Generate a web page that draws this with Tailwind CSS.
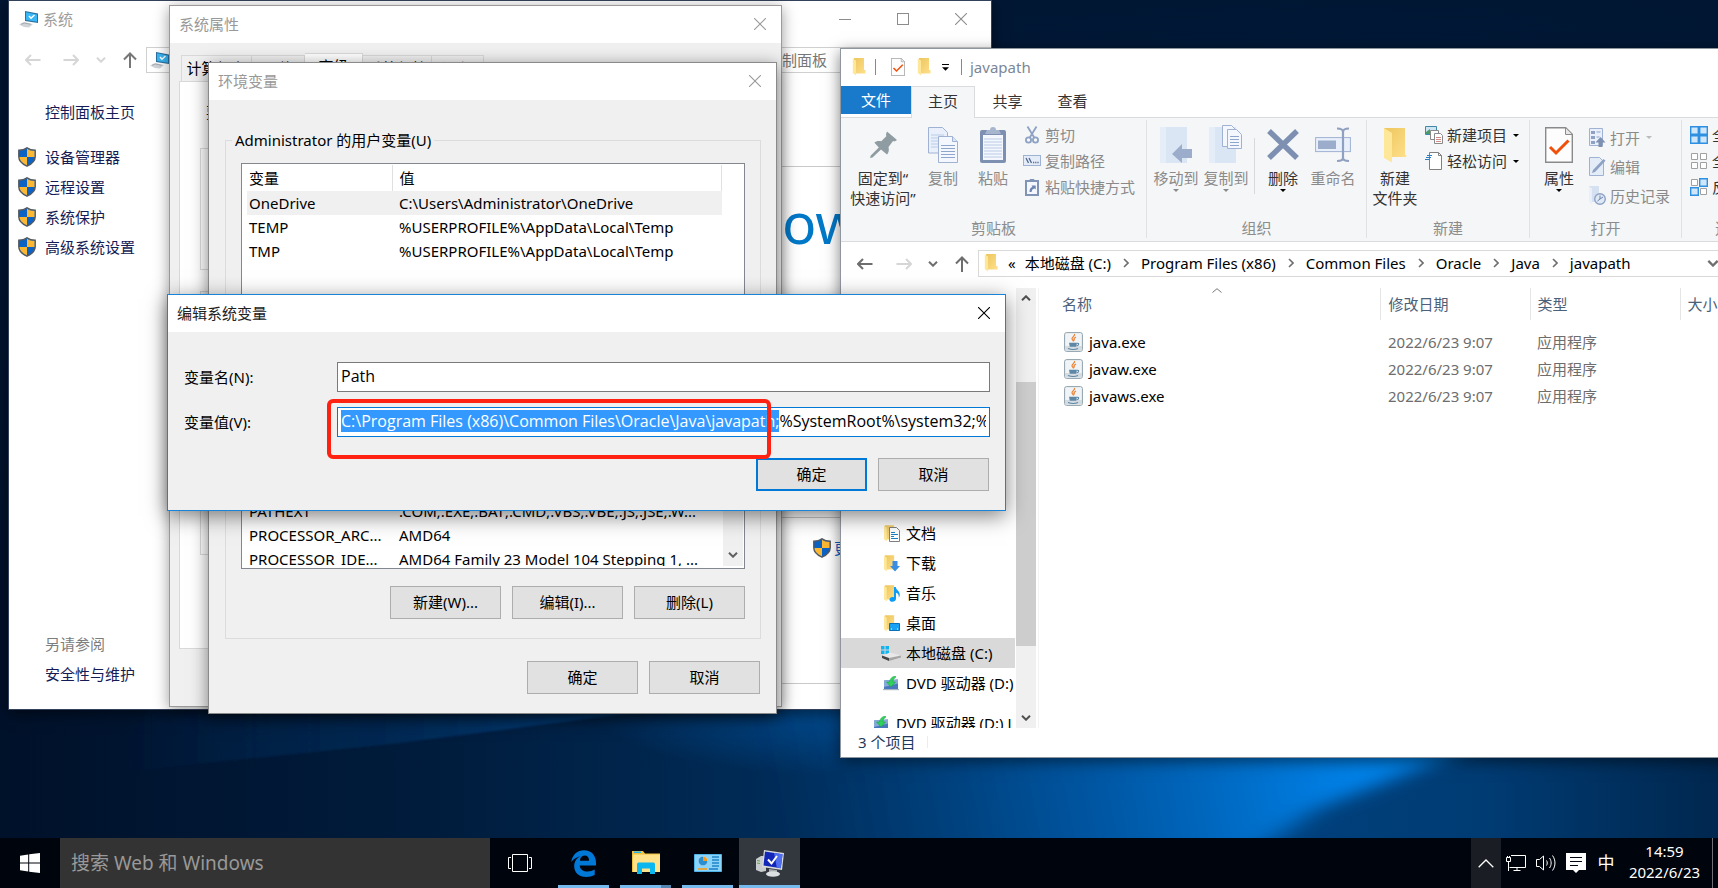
<!DOCTYPE html>
<html lang="zh-CN">
<head>
<meta charset="utf-8">
<title>编辑系统变量</title>
<script src="https://cdn.jsdelivr.net/npm/@tailwindcss/browser@4"></script>
</head>
<body class="h-screen overflow-hidden bg-[#001a38] font-['Noto_Sans','Noto_Sans_CJK_SC',sans-serif] text-[15px] leading-5 text-black">

<svg class="absolute h-0 w-0" aria-hidden="true">
  <defs>
    <linearGradient id="gold" x1="0" x2="1" y1="0" y2="1"><stop offset="0" stop-color="#ecc55e"/><stop offset="1" stop-color="#ffe08a"/></linearGradient>
    <symbol id="shield" viewBox="0 0 18 20">
      <path d="M9 .8c2.400 1.800 5 2.500 8.200 2.500v6.500c0 4.200-3.400 7.300-8.200 9.400C4.200 17.100.8 14 .8 9.800V3.300C4 3.300 6.600 2.600 9 .8z" fill="#0c63c4" stroke="#55595e" stroke-width="1.400"/>
      <path d="M9 1.700c2.200 1.500 4.600 2.200 7.500 2.300V10H9zM9 10v8.300C4.800 16.400 1.700 13.700 1.500 10z" fill="#fdb833"/>
    </symbol>
    <symbol id="pc" viewBox="0 0 20 17">
      <path d="M6 0l13 2.500v9.500L6 10z" fill="#2b6f9e"/><path d="M7 1.300l11 2.100v7.400L7 9z" fill="#38b6f5"/>
      <path d="M10 5l2 2.200L15.500 4" stroke="#fff" stroke-width="1.500" fill="none"/>
      <path d="M0 13.500L5 11l9 2-4 3.500-5-.5z" fill="#cfd3d8"/><path d="M2 13.300l3.500-1.300 6 1.300" stroke="#9aa0a6" stroke-width=".8" fill="none"/>
    </symbol>
    <symbol id="folder" viewBox="0 0 14 18">
      <path d="M2 0h10v12h1.500v3.500H2z" fill="url(#gold)"/><path d="M.8.600L4 2.500v15L.8 15z" fill="#ffe79a"/>
    </symbol>
    <symbol id="bigfolder" viewBox="0 0 28 36">
      <path d="M3 1h21v26.500l2 1.500-2 1H3z" fill="url(#gold)"/><path d="M3 1l8 5v29.500L3 31z" fill="#ffe79a"/>
    </symbol>
    <symbol id="close" viewBox="0 0 12 12"><path d="M0 0l12 12M12 0L0 12" stroke="currentColor" stroke-width="1.100" fill="none"/></symbol>
    <symbol id="arrow" viewBox="0 0 16 12"><path d="M15.500 6H1M6 1L1 6l5 5" stroke="currentColor" stroke-width="2" fill="none"/></symbol>
    <symbol id="up" viewBox="0 0 14 16"><path d="M7 16V1.500M1 7.500l6-6 6 6" stroke="currentColor" stroke-width="2" fill="none"/></symbol>
    <symbol id="chev" viewBox="0 0 10 6"><path d="M1 .7l4 4 4-4" stroke="currentColor" stroke-width="2" fill="none"/></symbol>
    <symbol id="sep" viewBox="0 0 6 10"><path d="M1 1l4 4-4 4" stroke="currentColor" stroke-width="1.600" fill="none"/></symbol>
    <symbol id="drop" viewBox="0 0 6 3"><path d="M0 0h6L3 3z" fill="currentColor"/></symbol>
    <symbol id="doccheck" viewBox="0 0 28 36">
      <path d="M.7.700h20l6.600 6.600v28H.7z" fill="#fdfdfd" stroke="#8a8a8a" stroke-width="1.400"/><path d="M20.500 1v6.500H27" fill="#e8e8e8" stroke="#8a8a8a"/>
      <path d="M5 20l6 6L23.500 13.500" stroke="#f0500a" stroke-width="3" fill="none"/>
    </symbol>
    <symbol id="java" viewBox="0 0 19 20">
      <rect x=".6" y=".6" width="17.800" height="18.800" rx="2" fill="#f1f4f6" stroke="#8fa0ad"/><path d="M1 14h17v4.500H1z" fill="#d3dbe1"/>
      <path d="M10.500 2c1 2-3 3-2.500 5 .2 1 1.500 1.200 1.500 2.500M12 5c-2 1-2.500 2-1.500 3.500" stroke="#ec7d2b" stroke-width="1.200" fill="none"/>
      <path d="M5 10.700h8l-.8 4H5.800z" fill="#5d87a5"/><path d="M13 11.200c2.500-.2 2 2.300-.5 2.500M4 16.600c3 1 7.500 1 10 0" stroke="#5d87a5" stroke-width="1.100" fill="none"/>
    </symbol>
    <symbol id="dvd" viewBox="0 0 16 15">
      <path d="M1 4.500l14-1v9.500H1z" fill="#4a78bd"/><path d="M1 4.500l14-1v4L1 11z" fill="#86a9d8"/><path d="M0 13h16v1.200H0z" fill="#a9b4c2"/>
      <path d="M12.500 0C9 .5 7 2.500 6.500 6H3.500L8 11l4.500-5H9.800c.2-2 .9-3.500 2.700-4.500z" fill="#2fd05c" stroke="#13a03c" stroke-width=".5"/>
    </symbol>
  </defs>
</svg>

<main class="relative h-full overflow-hidden">
  <!-- wallpaper -->
  <svg class="absolute inset-0 h-full w-full" viewBox="0 0 1718 888" preserveAspectRatio="none" aria-hidden="true">
    <defs>
      <linearGradient id="base" x1="0" x2="1"><stop offset="0" stop-color="#00112a"/><stop offset=".25" stop-color="#001c3c"/><stop offset=".5" stop-color="#002f5e"/><stop offset=".75" stop-color="#00407c"/><stop offset=".86" stop-color="#003c74"/><stop offset="1" stop-color="#00274f"/></linearGradient>
      <linearGradient id="topDark" x1="0" x2="0" y1="0" y2="1"><stop offset="0" stop-color="#001632" stop-opacity=".97"/><stop offset=".3" stop-color="#001632" stop-opacity=".8"/><stop offset=".7" stop-color="#001632" stop-opacity="0"/></linearGradient>
      <linearGradient id="beam" gradientUnits="userSpaceOnUse" x1="780" y1="838" x2="1370" y2="720"><stop offset="0" stop-color="#004a8c" stop-opacity="0"/><stop offset=".45" stop-color="#0060b4" stop-opacity=".6"/><stop offset=".9" stop-color="#007ce0"/><stop offset="1" stop-color="#0084ec"/></linearGradient>
      <linearGradient id="ray" gradientUnits="userSpaceOnUse" x1="120" y1="0" x2="640" y2="0"><stop offset="0" stop-color="#003c78" stop-opacity="0"/><stop offset=".5" stop-color="#003468" stop-opacity=".5"/><stop offset="1" stop-color="#004a90" stop-opacity=".8"/></linearGradient>
      <radialGradient id="haze"><stop offset="0" stop-color="#00529c" stop-opacity=".8"/><stop offset="1" stop-color="#00529c" stop-opacity="0"/></radialGradient>
      <filter id="soft" x="-10%" y="-30%" width="120%" height="160%"><feGaussianBlur stdDeviation="16 7"/></filter>
      <filter id="edge" x="-5%" y="-20%" width="110%" height="140%"><feGaussianBlur stdDeviation="1"/></filter>
    </defs>
    <rect width="1718" height="888" fill="url(#base)"/>
    <rect width="1718" height="888" fill="url(#topDark)"/>
    <path d="M100 774L400 743 640 712V640H200z" fill="url(#ray)" filter="url(#edge)"/>
    <ellipse cx="830" cy="705" rx="240" ry="70" fill="url(#haze)"/>
    <path d="M760 690H1550L1465 750 1315 810 1230 870H700z" fill="url(#beam)" filter="url(#soft)"/>
  </svg>

  <!-- 系统 -->
  <section class="absolute left-[8px] top-0 flex h-[710px] w-[984px] flex-col border border-[#33415a] bg-white shadow-[0_4px_14px_rgba(0,0,0,0.5)]">
    <header class="flex h-9 items-center pl-[10px] pr-6 text-[#9d9d9d]">
      <svg class="h-[17px] w-5"><use href="#pc"/></svg>
      <h2 class="ml-1">系统</h2>
      <div class="ml-auto flex items-center gap-[46px] text-[#8c8c8c]">
        <button aria-label="最小化" class="h-px w-3 bg-[#8c8c8c]"></button>
        <button aria-label="最大化" class="h-3 w-3 border border-[#8c8c8c]"></button>
        <button aria-label="关闭" class="h-3 w-3"><svg class="h-3 w-3"><use href="#close"/></svg></button>
      </div>
    </header>
    <div class="mt-[10px] flex h-[26px] items-center pl-4 text-[#d6d6d6]">
      <button aria-label="后退"><svg class="h-3 w-4"><use href="#arrow"/></svg></button>
      <button aria-label="前进" class="ml-[22px]"><svg class="h-3 w-4 rotate-180"><use href="#arrow"/></svg></button>
      <button aria-label="最近" class="ml-[17px]"><svg class="h-[6px] w-[10px]"><use href="#chev"/></svg></button>
      <button aria-label="向上" class="ml-[17px] text-[#777]"><svg class="h-4 w-[14px]"><use href="#up"/></svg></button>
      <div class="ml-[9px] flex h-[26px] flex-1 items-center border border-[#d0d0d0] pl-[3px] text-[#777]">
        <svg class="h-[17px] w-5"><use href="#pc"/></svg>
        <span class="ml-[612px]">制面板</span>
      </div>
    </div>
    <div class="flex flex-1">
      <nav class="flex w-[160px] flex-col pb-[25px] pl-[9px] pt-[29px] text-[#151c55]">
        <a href="#" class="ml-[27px] leading-5">控制面板主页</a>
        <ul class="mt-5">
          <li class="flex h-[30px] items-center gap-[9px]"><svg class="h-5 w-[18px]"><use href="#shield"/></svg><a href="#">设备管理器</a></li>
          <li class="flex h-[30px] items-center gap-[9px]"><svg class="h-5 w-[18px]"><use href="#shield"/></svg><a href="#">远程设置</a></li>
          <li class="flex h-[30px] items-center gap-[9px]"><svg class="h-5 w-[18px]"><use href="#shield"/></svg><a href="#">系统保护</a></li>
          <li class="flex h-[30px] items-center gap-[9px]"><svg class="h-5 w-[18px]"><use href="#shield"/></svg><a href="#">高级系统设置</a></li>
        </ul>
        <p class="ml-[27px] mt-auto text-[#7d7d7d]">另请参阅</p>
        <a href="#" class="ml-[27px] mt-[10px]">安全性与维护</a>
      </nav>
      <div class="flex flex-1 flex-col pl-[613px] pt-[93px]">
        <div class="h-[352px] border-y border-[#c9c9c9] pt-[19px]">
          <p class="text-[57px] leading-[72px] text-[#0078c8]">ow</p>
        </div>
        <div class="flex h-[166px] items-start gap-[3px] border-b border-[#c9c9c9] pl-[31px] pt-5 text-[#0a5dc2]">
          <svg class="h-5 w-[18px]"><use href="#shield"/></svg><a href="#">更改设置</a>
        </div>
      </div>
    </div>
  </section>

  <!-- 系统属性 -->
  <section class="absolute left-[169px] top-[5px] flex h-[702px] w-[613px] flex-col border border-[#9a9a9a] bg-[#f0f0f0] shadow-[0_3px_14px_rgba(0,0,0,0.4)]">
    <header class="flex h-[37px] items-center justify-between bg-white pb-[2px] pl-[9px] pr-[15px] text-[#999]">
      <h2>系统属性</h2>
      <button aria-label="关闭"><svg class="h-3 w-3"><use href="#close"/></svg></button>
    </header>
    <div class="mx-[9px] mt-[10px] flex items-end pl-[2px]" role="tablist">
      <button role="tab" class="h-[26px] w-[71px] border border-b-0 border-[#d9d9d9] pb-[2px]">计算机名</button>
      <button role="tab" class="h-[26px] w-[53px] border border-b-0 border-l-0 border-[#d9d9d9] pb-[2px]">硬件</button>
      <button role="tab" class="h-7 w-[58px] border border-b-0 border-l-0 border-[#d9d9d9] bg-white pb-1">高级</button>
      <button role="tab" class="h-[26px] w-[69px] border border-b-0 border-l-0 border-[#d9d9d9] pb-[2px]">系统保护</button>
      <button role="tab" class="h-[26px] w-[52px] border border-b-0 border-l-0 border-[#d9d9d9] pb-[2px]">远程</button>
    </div>
    <div class="mx-[9px] mb-[57px] flex flex-1 flex-col border border-[#d9d9d9] bg-white px-5 pt-5">
      <p class="ml-[6px]">要进行大多数更改，你必须作为管理员登录。</p>
      <div class="mt-[26px] h-[122px] border border-[#dcdcdc]"></div>
      <div class="mt-[21px] h-[264px] border border-[#dcdcdc]"></div>
    </div>
  </section>

  <!-- 环境变量 -->
  <section class="absolute left-[208px] top-[62px] flex h-[652px] w-[569px] flex-col border border-[#8a8a8a] bg-[#f0f0f0] shadow-[0_4px_16px_rgba(0,0,0,0.5)]">
    <header class="flex h-[37px] shrink-0 items-center justify-between bg-white pb-[2px] pl-[9px] pr-[15px] text-[#999]">
      <h2>环境变量</h2>
      <button aria-label="关闭"><svg class="h-3 w-3"><use href="#close"/></svg></button>
    </header>
    <fieldset class="ml-4 mr-[15px] mt-[30px] h-[245px] border border-[#dcdcdc] px-[15px]">
      <legend class="-ml-[9px] px-[3px]">Administrator 的用户变量(U)</legend>
      <div class="mt-[13px] h-[180px] border border-[#828790] bg-white px-[5px] pt-px">
        <table class="w-[475px] table-fixed text-left">
          <thead><tr class="h-[26px]"><th class="w-[145px] border-r border-[#e0e0e0] pl-[2px] font-normal">变量</th><th class="border-r border-[#e0e0e0] pl-[7px] font-normal">值</th></tr></thead>
          <tbody>
            <tr class="h-6 bg-[#f0f0f0]"><td class="pl-[2px]">OneDrive</td><td class="pl-[7px]">C:\Users\Administrator\OneDrive</td></tr>
            <tr class="h-6"><td class="pl-[2px]">TEMP</td><td class="pl-[7px]">%USERPROFILE%\AppData\Local\Temp</td></tr>
            <tr class="h-6"><td class="pl-[2px]">TMP</td><td class="pl-[7px]">%USERPROFILE%\AppData\Local\Temp</td></tr>
          </tbody>
        </table>
      </div>
    </fieldset>
    <div class="ml-4 mr-[15px] mt-auto flex h-[242px] flex-col border border-[#dcdcdc] px-[15px]">
      <div class="mt-[20px] flex h-[151px] justify-between overflow-hidden border border-[#828790] bg-white pb-[2px] pl-[5px] pr-px">
        <div class="flex flex-1 flex-col overflow-hidden">
        <table class="mt-[80px] w-[470px] table-fixed text-left">
          <tbody>
            <tr class="h-6"><td class="w-[145px] pl-[2px]">PATHEXT</td><td class="whitespace-nowrap pl-[7px]">.COM;.EXE;.BAT;.CMD;.VBS;.VBE;.JS;.JSE;.W...</td></tr>
            <tr class="h-6"><td class="whitespace-nowrap pl-[2px]">PROCESSOR_ARC...</td><td class="pl-[7px]">AMD64</td></tr>
            <tr class="h-6"><td class="whitespace-nowrap pl-[2px]">PROCESSOR_IDE...</td><td class="whitespace-nowrap pl-[7px]">AMD64 Family 23 Model 104 Stepping 1, ...</td></tr>
          </tbody>
        </table>
        </div>
        <div class="flex w-5 items-end justify-center bg-[#f0f0f0] pb-2 text-[#606060]"><svg class="h-[6px] w-[10px]"><use href="#chev"/></svg></div>
      </div>
      <div class="mt-[17px] flex justify-end gap-[11px]">
        <button class="h-[33px] w-[111px] border border-[#adadad] bg-[#e1e1e1] pb-[2px]">新建(W)...</button>
        <button class="h-[33px] w-[111px] border border-[#adadad] bg-[#e1e1e1] pb-[2px]">编辑(I)...</button>
        <button class="h-[33px] w-[111px] border border-[#adadad] bg-[#e1e1e1] pb-[2px]">删除(L)</button>
      </div>
    </div>
    <div class="mb-[19px] mr-4 mt-[22px] flex justify-end gap-[11px]">
      <button class="h-[33px] w-[111px] border border-[#adadad] bg-[#e1e1e1] pb-[2px]">确定</button>
      <button class="h-[33px] w-[111px] border border-[#adadad] bg-[#e1e1e1] pb-[2px]">取消</button>
    </div>
  </section>

  <!-- 资源管理器: javapath -->
  <section class="absolute -right-[60px] left-[840px] top-[48px] flex h-[710px] flex-col overflow-hidden border border-[#8f969e] bg-white shadow-[0_4px_14px_rgba(0,0,0,0.5)]">
    <header class="flex h-[37px] shrink-0 items-center pb-px pl-[11px]">
      <svg class="h-[18px] w-[14px]"><use href="#folder"/></svg>
      <span class="ml-[9px] h-4 w-px bg-[#888]"></span>
      <button aria-label="属性" class="ml-[15px]"><svg class="h-[18px] w-[14px]"><use href="#doccheck"/></svg></button>
      <button aria-label="新建文件夹" class="ml-3"><svg class="h-[18px] w-[14px]"><use href="#folder"/></svg></button>
      <button aria-label="自定义快速访问工具栏" class="ml-[11px] flex flex-col gap-[2px]"><span class="h-px w-[7px] bg-black"></span><svg class="h-[4px] w-[7px]"><use href="#drop"/></svg></button>
      <span class="ml-3 h-4 w-px bg-[#888]"></span>
      <h2 class="ml-2 text-[#7b8797]">javapath</h2>
    </header>
    <div class="flex h-8 shrink-0 text-[#333]" role="tablist">
      <div class="w-[70px] border-b border-[#dadbdc]"><button role="tab" class="h-7 w-full bg-[#1979ca] text-white">文件</button></div>
      <button role="tab" class="w-[64px] border border-b-0 border-[#dadbdc] bg-[#f5f6f7] pb-[3px]">主页</button>
      <button role="tab" class="w-[65px] border-b border-[#dadbdc] pb-[2px]">共享</button>
      <button role="tab" class="w-[65px] border-b border-[#dadbdc] pb-[2px]">查看</button>
      <span class="flex-1 border-b border-[#dadbdc]"></span>
    </div>

    <!-- ribbon -->
    <div class="flex h-[124px] shrink-0 overflow-hidden border-b border-[#dadbdc] bg-[#f5f6f7] text-[#8a8a8a]">
      <div class="flex w-[305px] shrink-0 flex-col pb-[3px]">
        <div class="flex flex-1 pl-[7px]">
          <button class="flex w-[70px] flex-col items-center pt-[9px] text-[#333]">
            <svg class="mb-[5px] h-9 w-9" viewBox="0 0 36 36"><path d="M22 4.500l10 8.500-2.500 1.500-1.500-.5-4.500 6c.8 3 .2 5.500-1.500 7.500l-6-5L7.500 30.500 5 31l.8-2.500 8-8-4.500-5c2-1.500 4-2 7-1.200l5-5-.3-2z" fill="#8f9ca1"/></svg>
            <span>固定到“</span><span>快速访问”</span>
          </button>
          <button class="flex w-[50px] flex-col items-center pt-[9px]">
            <svg class="mb-[5px] h-9 w-[30px]" viewBox="0 0 30 36" fill="#e9f0fb" stroke="#9fb2d3"><path d="M.5.500h14l5 5v20.500H.5z"/><path d="M3 8h13M3 11h13M3 14h13M3 17h13M3 20h13" stroke="#b9cae6"/><path d="M10.500 9.500h14l5 5v21h-19z" fill="#f4f8fe"/><path d="M24.500 9.500v5h5" fill="#d9e4f5"/><path d="M13 18.500h14M13 21.500h14M13 24.500h14M13 27.500h14M13 30.500h14" stroke="#8ea5cc"/></svg>
            <span>复制</span>
          </button>
          <button class="flex w-[50px] flex-col items-center pt-[9px]">
            <svg class="mb-[5px] h-9 w-[26px]" viewBox="0 0 26 36"><rect y="3" width="26" height="33" rx="2" fill="#7e90b2"/><path d="M3 8h20v25H3z" fill="#f4f8fe"/><path d="M4 12h18M4 15h18M4 18h18M4 21h18M4 24h18M4 27h18M4 30h18" stroke="#b9cae6"/><path d="M5 7l2-4h3a3 3 0 016 0h3l2 4z" fill="#a7b5cf"/></svg>
            <span>粘贴</span>
          </button>
          <div class="ml-[5px] flex flex-col pt-1">
            <button class="flex h-[26px] items-center gap-1"><svg class="h-[18px] w-[18px]" viewBox="0 0 18 18" fill="none" stroke="#8ea2c4" stroke-width="1.800"><path d="M4.500.500L11.500 12M13.500.500L6.500 12"/><circle cx="5.500" cy="14" r="2.600"/><circle cx="12.500" cy="14" r="2.600"/></svg>剪切</button>
            <button class="flex h-[26px] items-center gap-1"><svg class="h-[18px] w-[18px]" viewBox="0 0 18 18"><rect x=".5" y="3.500" width="17" height="10" fill="#e4ecf8" stroke="#9fb2d3"/><path d="M3 6l2.500 5M6 6l2.500 5" stroke="#4f6690" stroke-width="1.300"/><path d="M10 10.500h1.200M12.200 10.500h1.200M14.400 10.500h1.200" stroke="#4f6690" stroke-width="1.300"/></svg>复制路径</button>
            <button class="flex h-[26px] items-center gap-1"><svg class="h-[18px] w-[18px]" viewBox="0 0 18 18"><path d="M2 2h14v16H2z" fill="#8294b6"/><path d="M4 4h10v12H4z" fill="#f4f8fe"/><path d="M6 3l1-2h4l1 2z" fill="#8294b6"/><path d="M6.500 14c0-3 1-4.500 3-5l-1-1.500h4.200v4l-1.200-1c-2 .3-2.500 1.500-3 3.500z" fill="#6d84ae"/></svg>粘贴快捷方式</button>
          </div>
        </div>
        <p class="text-center text-[#8c8c8c]">剪贴板</p>
      </div>
      <span class="mb-[3px] mt-[2px] w-px shrink-0 bg-[#e0e1e3]"></span>

      <div class="flex w-[219px] shrink-0 flex-col pb-[3px]">
        <div class="flex flex-1 pl-1">
          <button class="flex w-[50px] flex-col items-center pt-[9px]">
            <svg class="mb-[5px] h-9 w-8" viewBox="0 0 32 36"><path d="M0 0h27v36H0z" fill="#dbe6f5"/><path d="M0 0h6v36H0z" fill="#e5edf9"/><path d="M32 22H22v-5L12 27l10 9v-5h10z" fill="#9badcb"/></svg>
            <span class="whitespace-nowrap">移动到</span><svg class="mt-px h-[3px] w-[6px]"><use href="#drop"/></svg>
          </button>
          <button class="flex w-[50px] flex-col items-center pt-[7px]">
            <svg class="mb-[5px] h-[38px] w-[34px]" viewBox="0 0 34 38"><path d="M0 2h27v36H0z" fill="#dbe6f5"/><path d="M0 2h6v36H0z" fill="#e5edf9"/><g fill="#f4f8fe" stroke="#9fb2d3"><path d="M13.500.500h9l4 4v17h-13z"/><path d="M18.500 4.500h9l5 5v14h-14z"/><path d="M21 11.500h9M21 14.500h9M21 17.500h9M21 20.500h9" stroke="#8ea5cc"/></g></svg>
            <span class="whitespace-nowrap">复制到</span><svg class="mt-px h-[3px] w-[6px]"><use href="#drop"/></svg>
          </button>
          <span class="mx-[3px] mt-5 h-14 w-px bg-[#d8d9db]"></span>
          <button class="flex w-[50px] flex-col items-center pt-[9px] text-[#333]">
            <svg class="mb-[5px] h-9 w-8" viewBox="0 0 32 36"><path d="M2 4l28 27M30 4L2 31" stroke="#7e90b2" stroke-width="5.500" fill="none"/></svg>
            <span>删除</span><svg class="mt-px h-[3px] w-[6px] text-black"><use href="#drop"/></svg>
          </button>
          <button class="flex w-[50px] flex-col items-center pt-[9px]">
            <svg class="mb-[5px] h-9 w-9" viewBox="0 0 36 36"><rect x=".6" y="10.600" width="34.800" height="14" fill="#e9f0fb" stroke="#9fb2d3"/><path d="M3 13.500h18v8.500H3z" fill="#9badcb"/><path d="M22 1.500c3 0 6 .5 6 3.500v26c0 2-3 3-6 3M34 1.500c-3 0-6 .5-6 3.500M34 34c-3 0-6-1-6-3" fill="none" stroke="#8fa0c0" stroke-width="2.200"/></svg>
            <span class="whitespace-nowrap">重命名</span>
          </button>
        </div>
        <p class="text-center text-[#8c8c8c]">组织</p>
      </div>
      <span class="mb-[3px] mt-[2px] w-px shrink-0 bg-[#e0e1e3]"></span>

      <div class="flex w-[162px] shrink-0 flex-col pb-[3px] text-[#333]">
        <div class="flex flex-1 pl-[3px]">
          <button class="flex w-[50px] flex-col items-center pt-[9px]">
            <svg class="mb-[5px] h-9 w-7"><use href="#bigfolder"/></svg>
            <span>新建</span><span class="whitespace-nowrap">文件夹</span>
          </button>
          <div class="ml-[5px] flex flex-col pt-1">
            <button class="flex h-[26px] items-center gap-1"><svg class="h-[18px] w-[18px]" viewBox="0 0 18 18" fill="#fff"><path d="M.5.500h11v8H.5z" fill="#cfe6f2" stroke="#3f88a8"/><path d="M1 6l4-3v5H1z" fill="#4a9a6a"/><path d="M5.500 4.500h8v9h-8z" stroke="#8a8a8a"/><path d="M9.500 7.500h6l2 2v8h-8z" stroke="#8a8a8a"/><path d="M11 11.500h5M11 13.500h5M11 15.500h5" stroke="#d08a8a"/></svg>新建项目<svg class="ml-[2px] h-[3px] w-[6px] text-black"><use href="#drop"/></svg></button>
            <button class="flex h-[26px] items-center gap-1"><svg class="h-[18px] w-[18px]" viewBox="0 0 18 18"><path d="M4.500.500h9l3 3v14h-12z" fill="#fff" stroke="#808080"/><path d="M13.500.500v3h3" fill="none" stroke="#808080"/><path d="M2 3.500h5M1 5.500h5M0 7.500h4" stroke="#2f7ec0" stroke-width="1.200"/></svg>轻松访问<svg class="ml-[2px] h-[3px] w-[6px] text-black"><use href="#drop"/></svg></button>
          </div>
        </div>
        <p class="text-center text-[#8c8c8c]">新建</p>
      </div>
      <span class="mb-[3px] mt-[2px] w-px shrink-0 bg-[#e0e1e3]"></span>

      <div class="flex w-[151px] shrink-0 flex-col pb-[3px]">
        <div class="flex flex-1 pl-1">
          <button class="flex w-[50px] flex-col items-center pt-[9px] text-[#333]">
            <svg class="mb-[5px] h-9 w-7"><use href="#doccheck"/></svg>
            <span>属性</span><svg class="mt-px h-[3px] w-[6px] text-black"><use href="#drop"/></svg>
          </button>
          <div class="ml-1 flex flex-col pt-[5px]">
            <button class="flex h-[29px] items-center gap-1"><svg class="h-[19px] w-[18px]" viewBox="0 0 18 19"><path d="M1.500.500h13v17h-13z" fill="#e9f0fb" stroke="#9fb2d3"/><path d="M3 3h4v3H3zM3 8h4v3H3zM3 13h4v3H3z" fill="#8ea2c4"/><path d="M8.500 4h4M8.500 9h3" stroke="#8ea2c4"/><path d="M12.500 9l5 5.500h-3V19h-4v-4.500h-3z" fill="#7e90b2"/></svg>打开<svg class="ml-[2px] h-[3px] w-[6px] text-[#bbb]"><use href="#drop"/></svg></button>
            <button class="flex h-[29px] items-center gap-1"><svg class="h-[19px] w-[18px]" viewBox="0 0 18 19"><path d="M1.500.500h10l4 4v14h-14z" fill="#e4ecf8" stroke="#9fb2d3"/><path d="M4 16l1-3L15.500 2l2 1.800L7 15z" fill="#8ea2c4"/></svg>编辑</button>
            <button class="flex h-[29px] items-center gap-1"><svg class="h-[19px] w-[18px]" viewBox="0 0 18 19"><path d="M1 0h10v16H1z" fill="#d5e0f0"/><path d="M1 .5l3 2V18l-3-2z" fill="#e9f0fb"/><circle cx="12" cy="13" r="5.300" fill="#dfe8f5" stroke="#8ea2c4" stroke-width="1.400"/><path d="M12 9.500V13l-2.500 2M12 13l3-2" stroke="#6d84ae" fill="none"/></svg>历史记录</button>
          </div>
        </div>
        <p class="text-center text-[#8c8c8c]">打开</p>
      </div>
      <span class="mb-[3px] mt-[2px] w-px shrink-0 bg-[#e0e1e3]"></span>

      <div class="flex w-[96px] shrink-0 flex-col pb-[3px] text-[#333]">
        <div class="flex flex-1 flex-col pl-2 pt-1">
          <button class="flex h-[26px] shrink-0 items-center gap-1 whitespace-nowrap"><svg class="h-[18px] w-[18px]" viewBox="0 0 18 18" fill="#cfe6fb" stroke="#2f8fe0" stroke-width="1.400"><path d="M.7.700h7.600v7.600H.7zM9.700.700h7.600v7.600H9.700zM.7 9.700h7.600v7.600H.7zM9.700 9.700h7.600v7.600H9.700z"/></svg>全部选择</button>
          <button class="flex h-[26px] shrink-0 items-center gap-1 whitespace-nowrap"><svg class="h-[18px] w-[18px]" viewBox="0 0 18 18" fill="#fff" stroke="#a0a0a0"><path d="M1.500 1.500h6v6h-6zM10.500 1.500h6v6h-6zM1.500 10.500h6v6h-6zM10.500 10.500h6v6h-6z"/></svg>全部取消</button>
          <button class="flex h-[26px] shrink-0 items-center gap-1 whitespace-nowrap"><svg class="h-[18px] w-[18px]" viewBox="0 0 18 18" fill="#fff" stroke="#a0a0a0"><path d="M1.500 1.500h6v6h-6zM10.500 10.500h6v6h-6z"/><path d="M9.700.700h7.600v7.600H9.700zM.7 9.700h7.600v7.600H.7z" fill="#cfe6fb" stroke="#2f8fe0" stroke-width="1.400"/></svg>反向选择</button>
        </div>
        <p class="pl-[33px] text-[#8c8c8c]">选择</p>
      </div>
    </div>

    <!-- address bar -->
    <div class="mt-2 flex h-[27px] shrink-0 items-center pl-4 text-[#6e6e6e]">
      <button aria-label="后退"><svg class="h-3 w-4"><use href="#arrow"/></svg></button>
      <button aria-label="前进" class="ml-[23px] text-[#d6d6d6]"><svg class="h-3 w-4 rotate-180"><use href="#arrow"/></svg></button>
      <button aria-label="最近" class="ml-4"><svg class="h-[6px] w-[10px]"><use href="#chev"/></svg></button>
      <button aria-label="向上" class="ml-[17px]"><svg class="h-4 w-[14px]"><use href="#up"/></svg></button>
      <nav class="ml-[9px] flex h-[27px] w-[800px] items-center border border-[#d9d9d9] pb-px pl-[5px]">
        <svg class="h-[18px] w-[14px] shrink-0"><use href="#folder"/></svg>
        <span class="ml-[10px] text-black">«</span>
        <a href="#" class="ml-[9px] whitespace-nowrap text-black">本地磁盘 (C:)</a>
        <svg class="mx-3 h-[10px] w-[6px] shrink-0"><use href="#sep"/></svg>
        <a href="#" class="whitespace-nowrap text-black">Program Files (x86)</a>
        <svg class="mx-3 h-[10px] w-[6px] shrink-0"><use href="#sep"/></svg>
        <a href="#" class="whitespace-nowrap text-black">Common Files</a>
        <svg class="mx-3 h-[10px] w-[6px] shrink-0"><use href="#sep"/></svg>
        <a href="#" class="text-black">Oracle</a>
        <svg class="mx-3 h-[10px] w-[6px] shrink-0"><use href="#sep"/></svg>
        <a href="#" class="text-black">Java</a>
        <svg class="mx-3 h-[10px] w-[6px] shrink-0"><use href="#sep"/></svg>
        <a href="#" class="text-black">javapath</a>
        <button aria-label="展开" class="ml-auto mr-[57px]"><svg class="h-[7px] w-3"><use href="#chev"/></svg></button>
      </nav>
    </div>

    <div class="mt-[11px] flex h-[440px] shrink-0">
      <nav class="flex w-[174px] shrink-0 flex-col overflow-hidden whitespace-nowrap pt-[200px]">
        <a href="#" class="flex h-[30px] shrink-0 items-center pl-[43px]"><svg class="mr-2 h-[17px] w-[14px]"><use href="#folder"/></svg>图片</a>
        <a href="#" class="flex h-[30px] shrink-0 items-center gap-[6px] pl-[43px]"><svg class="h-[17px] w-4 shrink-0" viewBox="0 0 16 17"><use href="#folder" width="13" height="17" x="-1"/><path d="M5.500 2.500h7l3 3v11h-10z" fill="#fff" stroke="#808080"/><path d="M7 7.500h4M7 9.500h7M7 11.500h3M7 13.500h7" stroke="#1f7fc4"/></svg>文档</a>
        <a href="#" class="flex h-[30px] shrink-0 items-center gap-[6px] pl-[43px]"><svg class="h-[17px] w-4 shrink-0" viewBox="0 0 16 17"><use href="#folder" width="13" height="17" x="-1"/><path d="M8.500 6h5v5H16l-5 5.500L6 11h2.500z" fill="#3a8ee0"/></svg>下载</a>
        <a href="#" class="flex h-[30px] shrink-0 items-center gap-[6px] pl-[43px]"><svg class="h-[17px] w-4 shrink-0" viewBox="0 0 16 17"><use href="#folder" width="13" height="17" x="-1"/><path d="M10 2h1.800c.3 3 3.700 3.500 4 7.500 0 1.500-.5 2.500-1 3.200.3-3-1-4.200-2.800-4.900v5.700c0 4-6.500 4.200-6.500.9 0-2 2.500-3 4.500-2.200z" fill="#0c9bf5"/></svg>音乐</a>
        <a href="#" class="flex h-[30px] shrink-0 items-center gap-[6px] pl-[43px]"><svg class="h-[17px] w-4 shrink-0" viewBox="0 0 16 17"><use href="#folder" width="13" height="17" x="-1"/><path d="M5.500 8.500h10v7h-10z" fill="#18a0f5" stroke="#0a6fb5"/><path d="M7 14h1M13 14h1" stroke="#fff"/></svg>桌面</a>
        <a href="#" class="flex h-[30px] shrink-0 items-center gap-[5px] bg-[#d9d9d9] pl-10"><svg class="h-4 w-5 shrink-0" viewBox="0 0 20 16"><path d="M0 1h3.500v3.500H0zM4.500 1H8v3.500H4.500zM0 5.500h3.500V9H0zM4.500 5.500H8V9H4.500z" fill="#12b4f0"/><path d="M1 10.500l8-3 11 3v2L8 16l-7-3z" fill="#e8e8e8"/><path d="M1 10.500l7 2.500v3l-7-3z" fill="#444"/><path d="M8 13l12-2.500v2L8 16z" fill="#a5a5a5"/></svg>本地磁盘 (C:)</a>
        <a href="#" class="flex h-[30px] shrink-0 items-center gap-[7px] pl-[42px]"><svg class="h-[15px] w-4 shrink-0"><use href="#dvd"/></svg>DVD 驱动器 (D:)</a>
        <a href="#" class="mt-[10px] flex h-[30px] shrink-0 items-center gap-[7px] pl-8"><svg class="h-[15px] w-4 shrink-0"><use href="#dvd"/></svg>DVD 驱动器 (D:) J</a>
      </nav>
      <div class="ml-px flex w-5 shrink-0 flex-col items-center bg-[#f0f0f0] py-[7px] text-[#505050]">
        <svg class="h-[6px] w-[10px] rotate-180"><use href="#chev"/></svg>
        <div class="mt-[81px] h-[264px] w-full bg-[#cdcdcd]"></div>
        <svg class="mt-auto h-[6px] w-[10px]"><use href="#chev"/></svg>
      </div>
      <span class="ml-[2px] w-px shrink-0 bg-[#f2f2f2]"></span>
      <div class="relative flex-1 pl-[15px]">
        <svg class="absolute left-[173px] top-0 h-[5px] w-[10px] text-[#777]" viewBox="0 0 10 5"><path d="M.5 4.500L5 .7l4.500 3.800" stroke="currentColor" fill="none"/></svg>
        <table class="w-[750px] table-fixed text-left text-[#6d6d6d]">
          <thead class="text-[#4c607a]"><tr class="h-8">
            <th class="w-[326px] border-r border-[#e5e5e5] pl-2 font-normal">名称</th>
            <th class="w-[150px] border-r border-[#e5e5e5] pl-2 font-normal">修改日期</th>
            <th class="w-[150px] border-r border-[#e5e5e5] pl-[7px] font-normal">类型</th>
            <th class="pl-[7px] font-normal">大小</th></tr></thead>
          <tbody>
            <tr><td colspan="4" class="h-2"></td></tr>
            <tr class="h-[27px]"><td class="pl-[10px] text-black"><span class="flex items-center gap-[6px]"><svg class="h-5 w-[19px]"><use href="#java"/></svg>java.exe</span></td><td class="pl-2">2022/6/23 9:07</td><td class="pl-[7px]">应用程序</td><td></td></tr>
            <tr class="h-[27px]"><td class="pl-[10px] text-black"><span class="flex items-center gap-[6px]"><svg class="h-5 w-[19px]"><use href="#java"/></svg>javaw.exe</span></td><td class="pl-2">2022/6/23 9:07</td><td class="pl-[7px]">应用程序</td><td></td></tr>
            <tr class="h-[27px]"><td class="pl-[10px] text-black"><span class="flex items-center gap-[6px]"><svg class="h-5 w-[19px]"><use href="#java"/></svg>javaws.exe</span></td><td class="pl-2">2022/6/23 9:07</td><td class="pl-[7px]">应用程序</td><td></td></tr>
          </tbody>
        </table>
      </div>
    </div>
    <footer class="flex flex-1 items-center pb-[2px] pl-[17px] text-[#1e395b]">3 个项目<span class="ml-3 h-3 w-px bg-[#ececec]"></span></footer>
  </section>

  <!-- 编辑系统变量 -->
  <form class="absolute left-[167px] top-[294px] flex h-[217px] w-[839px] flex-col border border-[#1883d7] bg-[#f0f0f0] shadow-[0_5px_20px_rgba(0,0,0,0.5)]">
    <header class="flex h-[37px] items-center justify-between bg-white pb-[2px] pl-[9px] pr-[15px] text-[#222]">
      <h2>编辑系统变量</h2>
      <button type="button" aria-label="关闭" class="text-black"><svg class="h-3 w-3"><use href="#close"/></svg></button>
    </header>
    <div class="mt-[30px] grid grid-cols-[153px_1fr] items-center gap-y-[15px] pl-4 pr-[15px]">
      <label for="var-name">变量名(N):</label>
      <input id="var-name" value="Path" class="h-[30px] w-full border border-[#7a7a7a] bg-white px-[3px] pb-[2px] font-['Open_Sans',sans-serif] text-base leading-5">
      <label for="var-value">变量值(V):</label>
      <input id="var-value" value="C:\Program Files (x86)\Common Files\Oracle\Java\javapath;%SystemRoot%\system32;%SystemRoot%;%SystemRoot%\System32\Wbem" class="h-[30px] w-full border border-[#0078d7] bg-white px-[3px] pb-[2px] font-['Open_Sans',sans-serif] text-base leading-5 outline-none selection:bg-[#3399ff] selection:text-white">
    </div>
    <div class="mt-[21px] flex justify-end gap-[11px] pr-4">
      <button type="button" class="h-[33px] w-[111px] border-2 border-[#0078d7] bg-[#e1e1e1] pb-[2px]">确定</button>
      <button type="button" class="h-[33px] w-[111px] border border-[#adadad] bg-[#e1e1e1] pb-[2px]">取消</button>
    </div>
  </form>
  <div class="absolute left-[327px] top-[399px] h-[60px] w-[444px] rounded-md border-4 border-[#ff2212]"></div>

  <!-- taskbar -->
  <footer class="absolute inset-x-0 bottom-0 flex h-[50px] bg-[#00040c] text-white">
    <button aria-label="开始" class="flex w-[60px] items-center justify-center"><svg class="h-5 w-5" viewBox="0 0 20 20" fill="#fff"><path d="M0 2.700l8.200-1.200v8H0zM9.200 1.300L20 0v9.500H9.200zM0 10.500h8.200v8L0 17.300zM9.200 10.500H20V20L9.200 18.700z"/></svg></button>
    <input aria-label="搜索" placeholder="搜索 Web 和 Windows" class="w-[430px] bg-[#333] px-[11px] text-[19px] placeholder:text-[#999]">
    <button aria-label="任务视图" class="flex w-[60px] items-center justify-center"><svg class="h-[18px] w-6" viewBox="0 0 24 18" fill="none" stroke="#fff"><path d="M4.500.500h15v17h-15z"/><path d="M3 3.500H.5v11H3M21 3.500h2.500v11H21"/></svg></button>
    <button aria-label="Edge" class="ml-2 flex w-[51px] flex-col items-center border-b-[3px] border-[#76b9ed] pt-3">
      <svg class="h-[27px] w-[25px]" viewBox="0 0 25 27"><path d="M.3 12C1.300 4.500 6.500.3 13 .3 20.500.3 25 5.800 25 12.500v3H8.700c.3 4 3.800 6 7.800 6 2.700 0 5-.6 7.200-1.900v5.300c-2.500 1.300-5.300 2-8.300 2-7.500 0-12.200-4.300-12.200-10.700 0-4.700 2.500-8.400 6.600-10.200C6 7.200 2.500 8.700.3 12zM8.900 10.700h9.200c0-3.200-1.800-5.100-4.600-5.100-2.700 0-4.300 2.200-4.600 5.100z" fill="#0078d7"/></svg>
    </button>
    <button aria-label="文件资源管理器" class="ml-[11px] flex w-[51px] flex-col items-center pt-3">
      <svg class="mb-[11px] h-6 w-7" viewBox="0 0 28 24"><path d="M0 1h11l2 2.500h15V22H0z" fill="#f0c13d"/><path d="M1 4.500h27V22H1z" fill="#ffe28a"/><path d="M2 1.500h7v1.500H2z" fill="#29b4ee"/><path d="M5 24V14.500c0-1.500 1-2 2-2h14c1 0 2 .5 2 2V24h-5v-5.500h-8V24z" fill="#0cb6ee"/></svg>
      <span class="flex h-[3px] w-full"><span class="w-[41px] bg-[#76b9ed]"></span><span class="flex-1 bg-[#5686b0]"></span></span>
    </button>
    <button aria-label="控制面板" class="ml-[11px] flex w-[51px] flex-col items-center border-b-[3px] border-[#76b9ed] pt-4">
      <svg class="h-[18px] w-7" viewBox="0 0 28 18"><path d="M.5.500h27v17H.5z" fill="#8bd3f7" stroke="#4db3e8"/><circle cx="9" cy="7" r="4.500" fill="#fff"/><path d="M9 7V2.500A4.500 4.500 0 0113.500 7z" fill="#f49b1c"/><path d="M9 7h4.500A4.500 4.500 0 119 2.500z" fill="#2a8fd0"/><path d="M18 3h7M18 6h7M18 9h7M18 12h7" stroke="#1f84c8" stroke-width="1.600"/><path d="M4 15h9" stroke="#f49b1c" stroke-width="1.600"/><path d="M15 15h9" stroke="#1f84c8" stroke-width="1.600"/></svg>
    </button>
    <button aria-label="系统属性" class="ml-[6px] flex w-[61px] flex-col items-center border-b-[3px] border-[#76b9ed] bg-[#33383e] pt-3">
      <svg class="h-[27px] w-7" viewBox="0 0 28 27"><path d="M0 9l5-3h5v15l-5 1-5-2z" fill="#c9ccce"/><path d="M1 10.500l3 .5M1 13l3 .5" stroke="#63a84a"/><path d="M8 0l20 3-2 17L6 17z" fill="#d9dcdf"/><path d="M9 1.500l17.500 2.700-1.700 14L7.500 15.500z" fill="#1226b8"/><path d="M18 3l8.500 1.200-1.700 14-4-.6z" fill="#4f6ff0"/><path d="M12 9.500l3.500 4L21 6" stroke="#fff" stroke-width="2" fill="none"/><path d="M13 19l8 1v3H13z" fill="#a7abaf"/><ellipse cx="17" cy="24" rx="7" ry="2.800" fill="#dcdfe1"/></svg>
    </button>
    <div class="ml-auto flex items-stretch">
      <button aria-label="显示隐藏的图标" class="flex w-[30px] items-center justify-center bg-[#1a1e24]"><svg class="h-[9px] w-4" viewBox="0 0 16 9"><path d="M.7 8.300L8 1l7.300 7.300" fill="none" stroke="#fff" stroke-width="1.300"/></svg></button>
      <button aria-label="网络" class="ml-[5px] flex items-center"><svg class="h-[17px] w-5" viewBox="0 0 20 17" fill="none" stroke="#fff"><path d="M5 .5h14.500v12H3.500M11 13v3M7.500 15.500h7M.5 2.500h4v4h-4zM2.500 6.500v9.500M1.500 1v2M3.500 1v2"/></svg></button>
      <button aria-label="音量" class="ml-[10px] flex items-center"><svg class="h-[18px] w-5" viewBox="0 0 20 18" fill="none" stroke="#fff"><path d="M.5 5.500h3l4-3.500v14l-4-3.500h-3zM10.500 6.500c1 1.500 1 3.500 0 5M13.500 4c2.200 3 2.200 7 0 10M16.500 1.500c3.300 4.500 3.300 10.500 0 15"/></svg></button>
      <button aria-label="操作中心" class="ml-[10px] flex items-center"><svg class="h-5 w-5" viewBox="0 0 20 20"><path d="M0 0h20v17h-7l-3 3-3-3H0z" fill="#fff"/><path d="M4 4.500h12M4 8.500h12M4 12.500h8" stroke="#00040c"/></svg></button>
      <button class="ml-[10px] flex w-5 items-center justify-center text-[17px]">中</button>
      <div class="ml-[9px] mr-2 flex w-[79px] flex-col items-center justify-center pb-[2px] leading-[21px]"><time>14:59</time><time>2022/6/23</time></div>
      <button aria-label="显示桌面" class="w-[6px] border-l border-[#6c6f74]"></button>
    </div>
  </footer>
</main>
<script>
  const value = document.getElementById('var-value');
  value.focus({ preventScroll: true });
  value.setSelectionRange(0, value.value.indexOf(';') + 1, 'backward');
  value.scrollLeft = 0;
</script>
</body>
</html>
